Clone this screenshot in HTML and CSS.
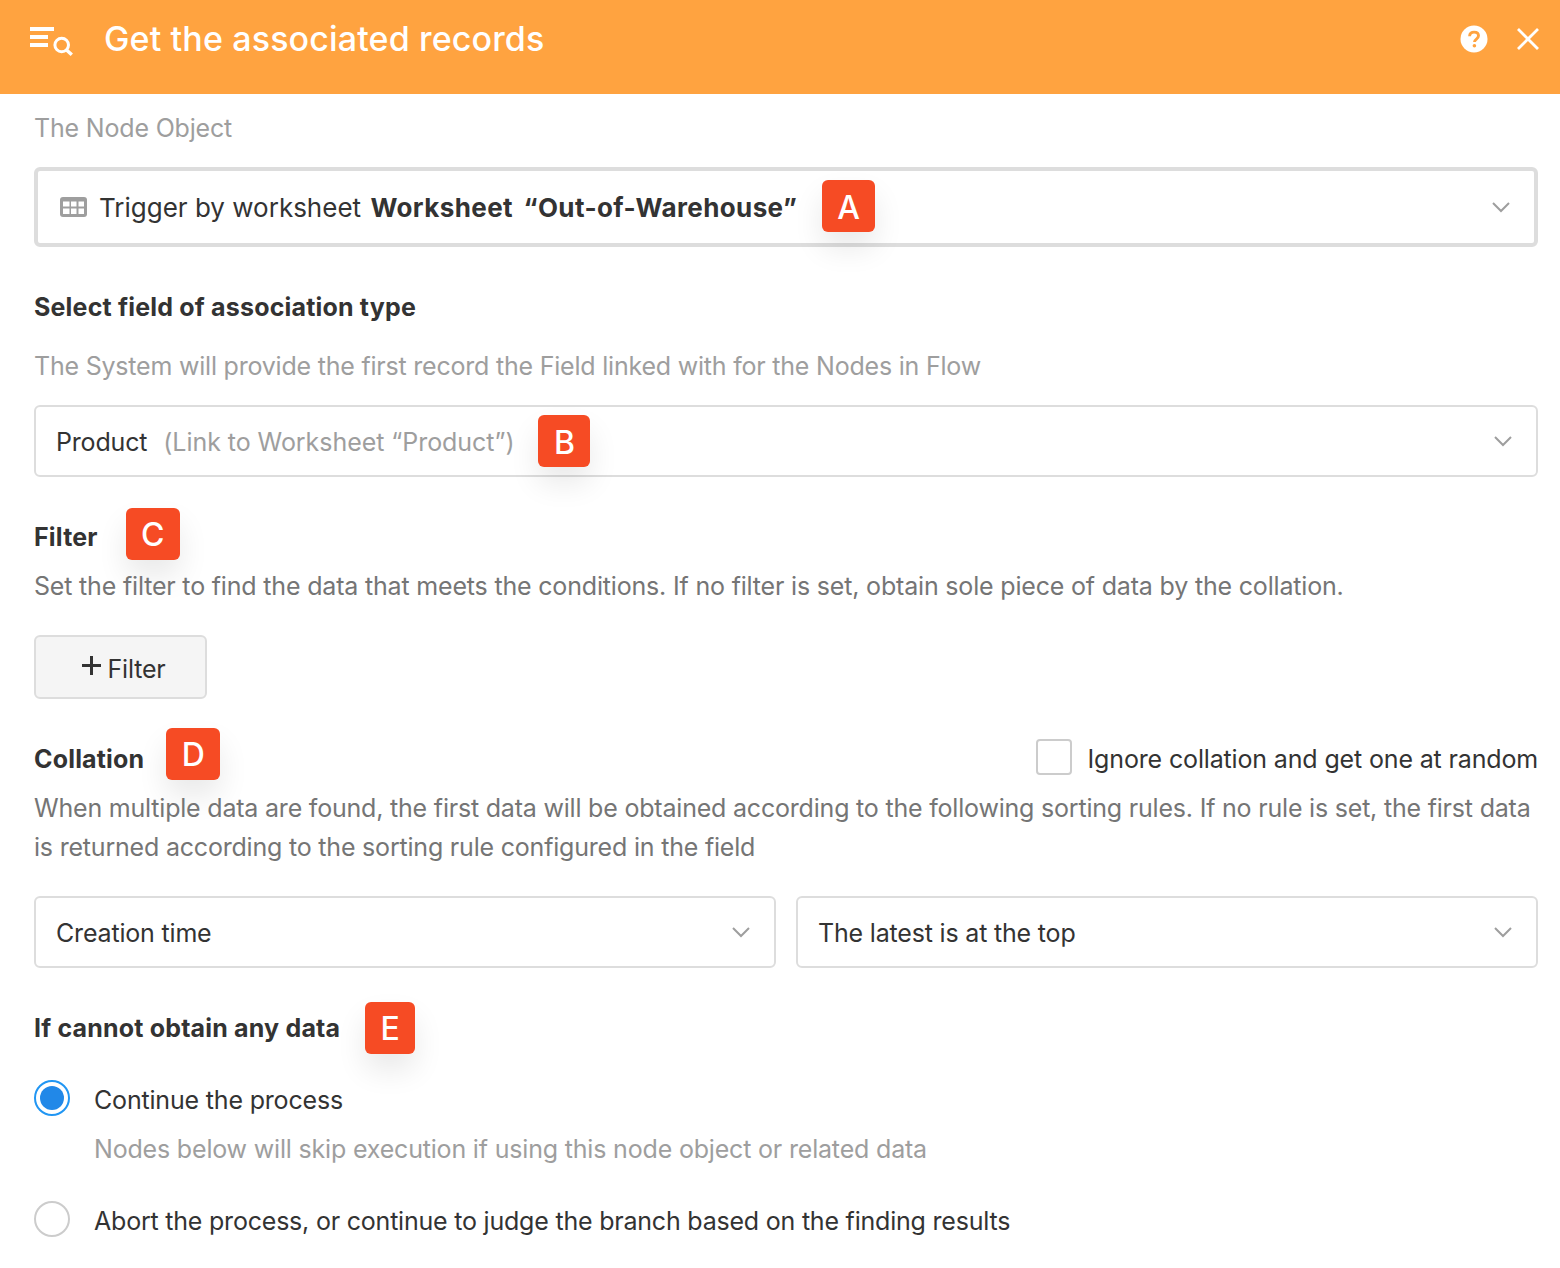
FILE: index.html
```html
<!DOCTYPE html>
<html lang="en">
<head>
<meta charset="utf-8">
<title>Get the associated records</title>
<link rel="stylesheet" href="styles.css">
</head>
<body>
<header class="header">
  <svg class="node-icon" width="44" height="30" viewBox="0 0 44 30" fill="none">
    <path d="M0 2h24M0 10h18M0 18h18" stroke="#fff" stroke-width="4"/>
    <circle cx="31.700" cy="18" r="6.800" stroke="#fff" stroke-width="3"/>
    <path d="M36.500 23l5.300 4.700" stroke="#fff" stroke-width="3.500"/>
  </svg>
  <h1 class="title">Get the associated records</h1>
  <svg class="help-icon" width="28" height="28" viewBox="0 0 28 28">
    <circle cx="14" cy="14" r="13.500" fill="#fff"/>
    <path d="M9.600 11.200c0-2.600 1.900-4.100 4.500-4.100s4.400 1.400 4.400 3.700c0 3.300-4 3.200-4 6.200" fill="none" stroke="#ffa340" stroke-width="2.900"/>
    <circle cx="14.400" cy="20.800" r="1.800" fill="#ffa340"/>
  </svg>
  <svg class="close-icon" width="24" height="24" viewBox="0 0 24 24">
    <path d="M2 2l20 20M22 2L2 22" stroke="#fff" stroke-width="2.800" fill="none"/>
  </svg>
</header>
<main class="content">
  <div class="line muted node-label">The Node Object</div>

  <div class="select select-thick">
    <svg class="table-icon" width="27" height="20" viewBox="0 0 27 20">
      <rect width="27" height="20" rx="3" fill="#9e9e9e"/>
      <path d="M3 4.500h6.500v5H3zM11 4.500h5.500v5H11zM18.500 4.500H24v5h-5.500zM3 11.500h6.500v5.500H3zM11 11.500h5.500v5.500H11zM18.500 11.500H24v5.500h-5.500z" fill="#fff"/>
    </svg>
    <span class="select-text">Trigger by worksheet <b class="strong">Worksheet “Out-of-Warehouse”</b></span>
    <span class="badge badge-a">A</span>
    <svg class="chevron" width="18" height="11" viewBox="0 0 18 11"><path d="M1 1l8 8 8-8" fill="none" stroke="#9e9e9e" stroke-width="2"/></svg>
  </div>

  <h2 class="line heading gap-40">Select field of association type</h2>
  <div class="line muted tight gap-19">The System will provide the first record the Field linked with for the Nodes in Flow</div>

  <div class="select gap-19">
    <span class="select-text">Product</span>
    <span class="select-note">(Link to Worksheet “Product”)</span>
    <span class="badge badge-b">B</span>
    <svg class="chevron" width="18" height="11" viewBox="0 0 18 11"><path d="M1 1l8 8 8-8" fill="none" stroke="#9e9e9e" stroke-width="2"/></svg>
  </div>

  <h2 class="line heading gap-40 heading-row">Filter<span class="badge badge-c">C</span></h2>
  <p class="line desc gap-9">Set the filter to find the data that meets the conditions. If no filter is set, obtain sole piece of data by the collation.</p>

  <button class="filter-btn" type="button"><span class="plus"></span>Filter</button>

  <div class="collation-row gap-40">
    <h2 class="line heading heading-row">Collation<span class="badge badge-d">D</span></h2>
    <label class="ignore"><span class="checkbox"></span>Ignore collation and get one at random</label>
  </div>
  <p class="desc desc-multi">When multiple data are found, the first data will be obtained according to the following sorting rules. If no rule is set, the first data is returned according to the sorting rule configured in the field</p>

  <div class="select-pair">
    <div class="select">
      <span class="select-text">Creation time</span>
      <svg class="chevron" width="18" height="11" viewBox="0 0 18 11"><path d="M1 1l8 8 8-8" fill="none" stroke="#9e9e9e" stroke-width="2"/></svg>
    </div>
    <div class="select">
      <span class="select-text">The latest is at the top</span>
      <svg class="chevron" width="18" height="11" viewBox="0 0 18 11"><path d="M1 1l8 8 8-8" fill="none" stroke="#9e9e9e" stroke-width="2"/></svg>
    </div>
  </div>

  <h2 class="line heading gap-40 heading-row">If cannot obtain any data<span class="badge badge-e">E</span></h2>

  <div class="radio-row gap-32"><span class="radio radio-on"></span>Continue the process</div>
  <div class="line muted radio-hint gap-9">Nodes below will skip execution if using this node object or related data</div>
  <div class="radio-row tight gap-32"><span class="radio"></span>Abort the process, or continue to judge the branch based on the finding results</div>
</main>
</body>
</html>
```

FILE: styles.css
```css
* { box-sizing: border-box; }
html, body { margin: 0; padding: 0; background: #fff; }
body {
  width: 1560px;
  height: 1268px;
  overflow: hidden;
  font-family: Inter, "Liberation Sans", sans-serif;
  font-size: 25px;
  letter-spacing: -0.18px;
  color: #333;
}
.header {
  height: 94px;
  background: #ffa340;
  display: flex;
  align-items: flex-start;
  color: #fff;
}
.node-icon { margin: 27px 0 0 30px; flex: none; }
.title {
  margin: 16px auto 0 30px;
  font-size: 34px;
  line-height: 46px;
  font-weight: 500;
  letter-spacing: 0.14px;
}
.help-icon { margin: 25px 0 0; flex: none; }
.close-icon { margin: 27px 20px 0 28px; flex: none; }
.content { padding: 14px 22px 0 34px; }
.line { line-height: 40px; margin: 0; }
.muted { color: #9e9e9e; }
.tight { letter-spacing: -0.21px; }
.node-label { margin-bottom: 19px; }
.heading {
  font-size: 25px;
  font-weight: 700;
  color: #333;
  letter-spacing: 0.18px;
}
.heading-row { display: flex; align-items: center; }
.desc { color: #757575; margin: 0; }
.desc-multi { line-height: 39px; margin-top: 10px; letter-spacing: -0.2px; }
.gap-9 { margin-top: 9px; }
.gap-19 { margin-top: 19px; }
.gap-32 { margin-top: 32px; }
.gap-40 { margin-top: 40px; }
.select {
  height: 72px;
  display: flex;
  align-items: center;
  padding: 0 24px 0 20px;
  border: 2px solid #ddd;
  border-radius: 6px;
  background: #fff;
  flex: 1 1 0;
}
.select-thick {
  height: 80px;
  border-width: 4px;
  padding: 0 24px 0 22px;
  font-size: 26px;
  letter-spacing: 0;
}
.table-icon { flex: none; margin-right: 12px; }
.select-text { white-space: nowrap; line-height: 40px; padding-top: 1px; }
.strong { margin-left: 2px; font-weight: 700; font-size: 26px; letter-spacing: 0.4px; word-spacing: 4px; }
.select-note { color: #9e9e9e; margin-left: 16px; white-space: nowrap; padding-top: 1px; letter-spacing: -0.05px; }
.chevron { margin-left: auto; flex: none; }
.badge {
  flex: none;
  height: 52px;
  padding-top: 2px;
  display: flex;
  align-items: center;
  justify-content: center;
  background: #f64b24;
  color: #fff;
  border-radius: 6px;
  font-size: 32px;
  font-weight: 500;
  letter-spacing: 0;
  box-shadow: 0 16px 30px rgba(0, 0, 0, 0.09);
}
.badge-a { width: 53px; margin-left: 25px; margin-top: -2px; }
.badge-b { width: 52px; margin-left: 24px; }
.badge-c { width: 54px; margin-left: 28px; margin-top: -9px; margin-bottom: -3px; }
.badge-d { width: 54px; margin-left: 22px; margin-top: -11px; margin-bottom: -1px; }
.badge-e { width: 50px; margin-left: 25px; margin-top: -6px; margin-bottom: -6px; }
.filter-btn {
  display: flex;
  align-items: center;
  justify-content: center;
  width: 173px;
  height: 64px;
  margin-top: 29px;
  padding: 4px 0 0 7px;
  background: #f5f5f5;
  border: 2px solid #ddd;
  border-radius: 6px;
  font: inherit;
  letter-spacing: inherit;
  color: #333;
}
.plus {
  width: 19px;
  height: 19px;
  margin-right: 6px;
  margin-top: -8px;
  background:
    linear-gradient(#333, #333) center / 100% 3px no-repeat,
    linear-gradient(#333, #333) center / 3px 100% no-repeat;
}
.collation-row { display: flex; justify-content: space-between; align-items: center; height: 40px; }
.ignore { display: flex; align-items: center; line-height: 40px; color: #333; letter-spacing: -0.15px; }
.checkbox {
  width: 36px;
  height: 36px;
  margin-right: 16px;
  border: 2px solid #ccc;
  border-radius: 4px;
  margin-top: -4px;
}
.select-pair { display: flex; gap: 20px; margin-top: 29px; }
.radio-row { display: flex; align-items: center; line-height: 40px; height: 40px; }
.radio {
  position: relative;
  flex: none;
  width: 36px;
  height: 36px;
  margin-right: 24px;
  margin-top: -4px;
  border: 2px solid #ccc;
  border-radius: 50%;
}
.radio-on { border-color: #2196f3; }
.radio-on::after {
  content: "";
  position: absolute;
  inset: 4px;
  background: #2188e8;
  border-radius: 50%;
}
.radio-hint { margin-left: 60px; }
```
